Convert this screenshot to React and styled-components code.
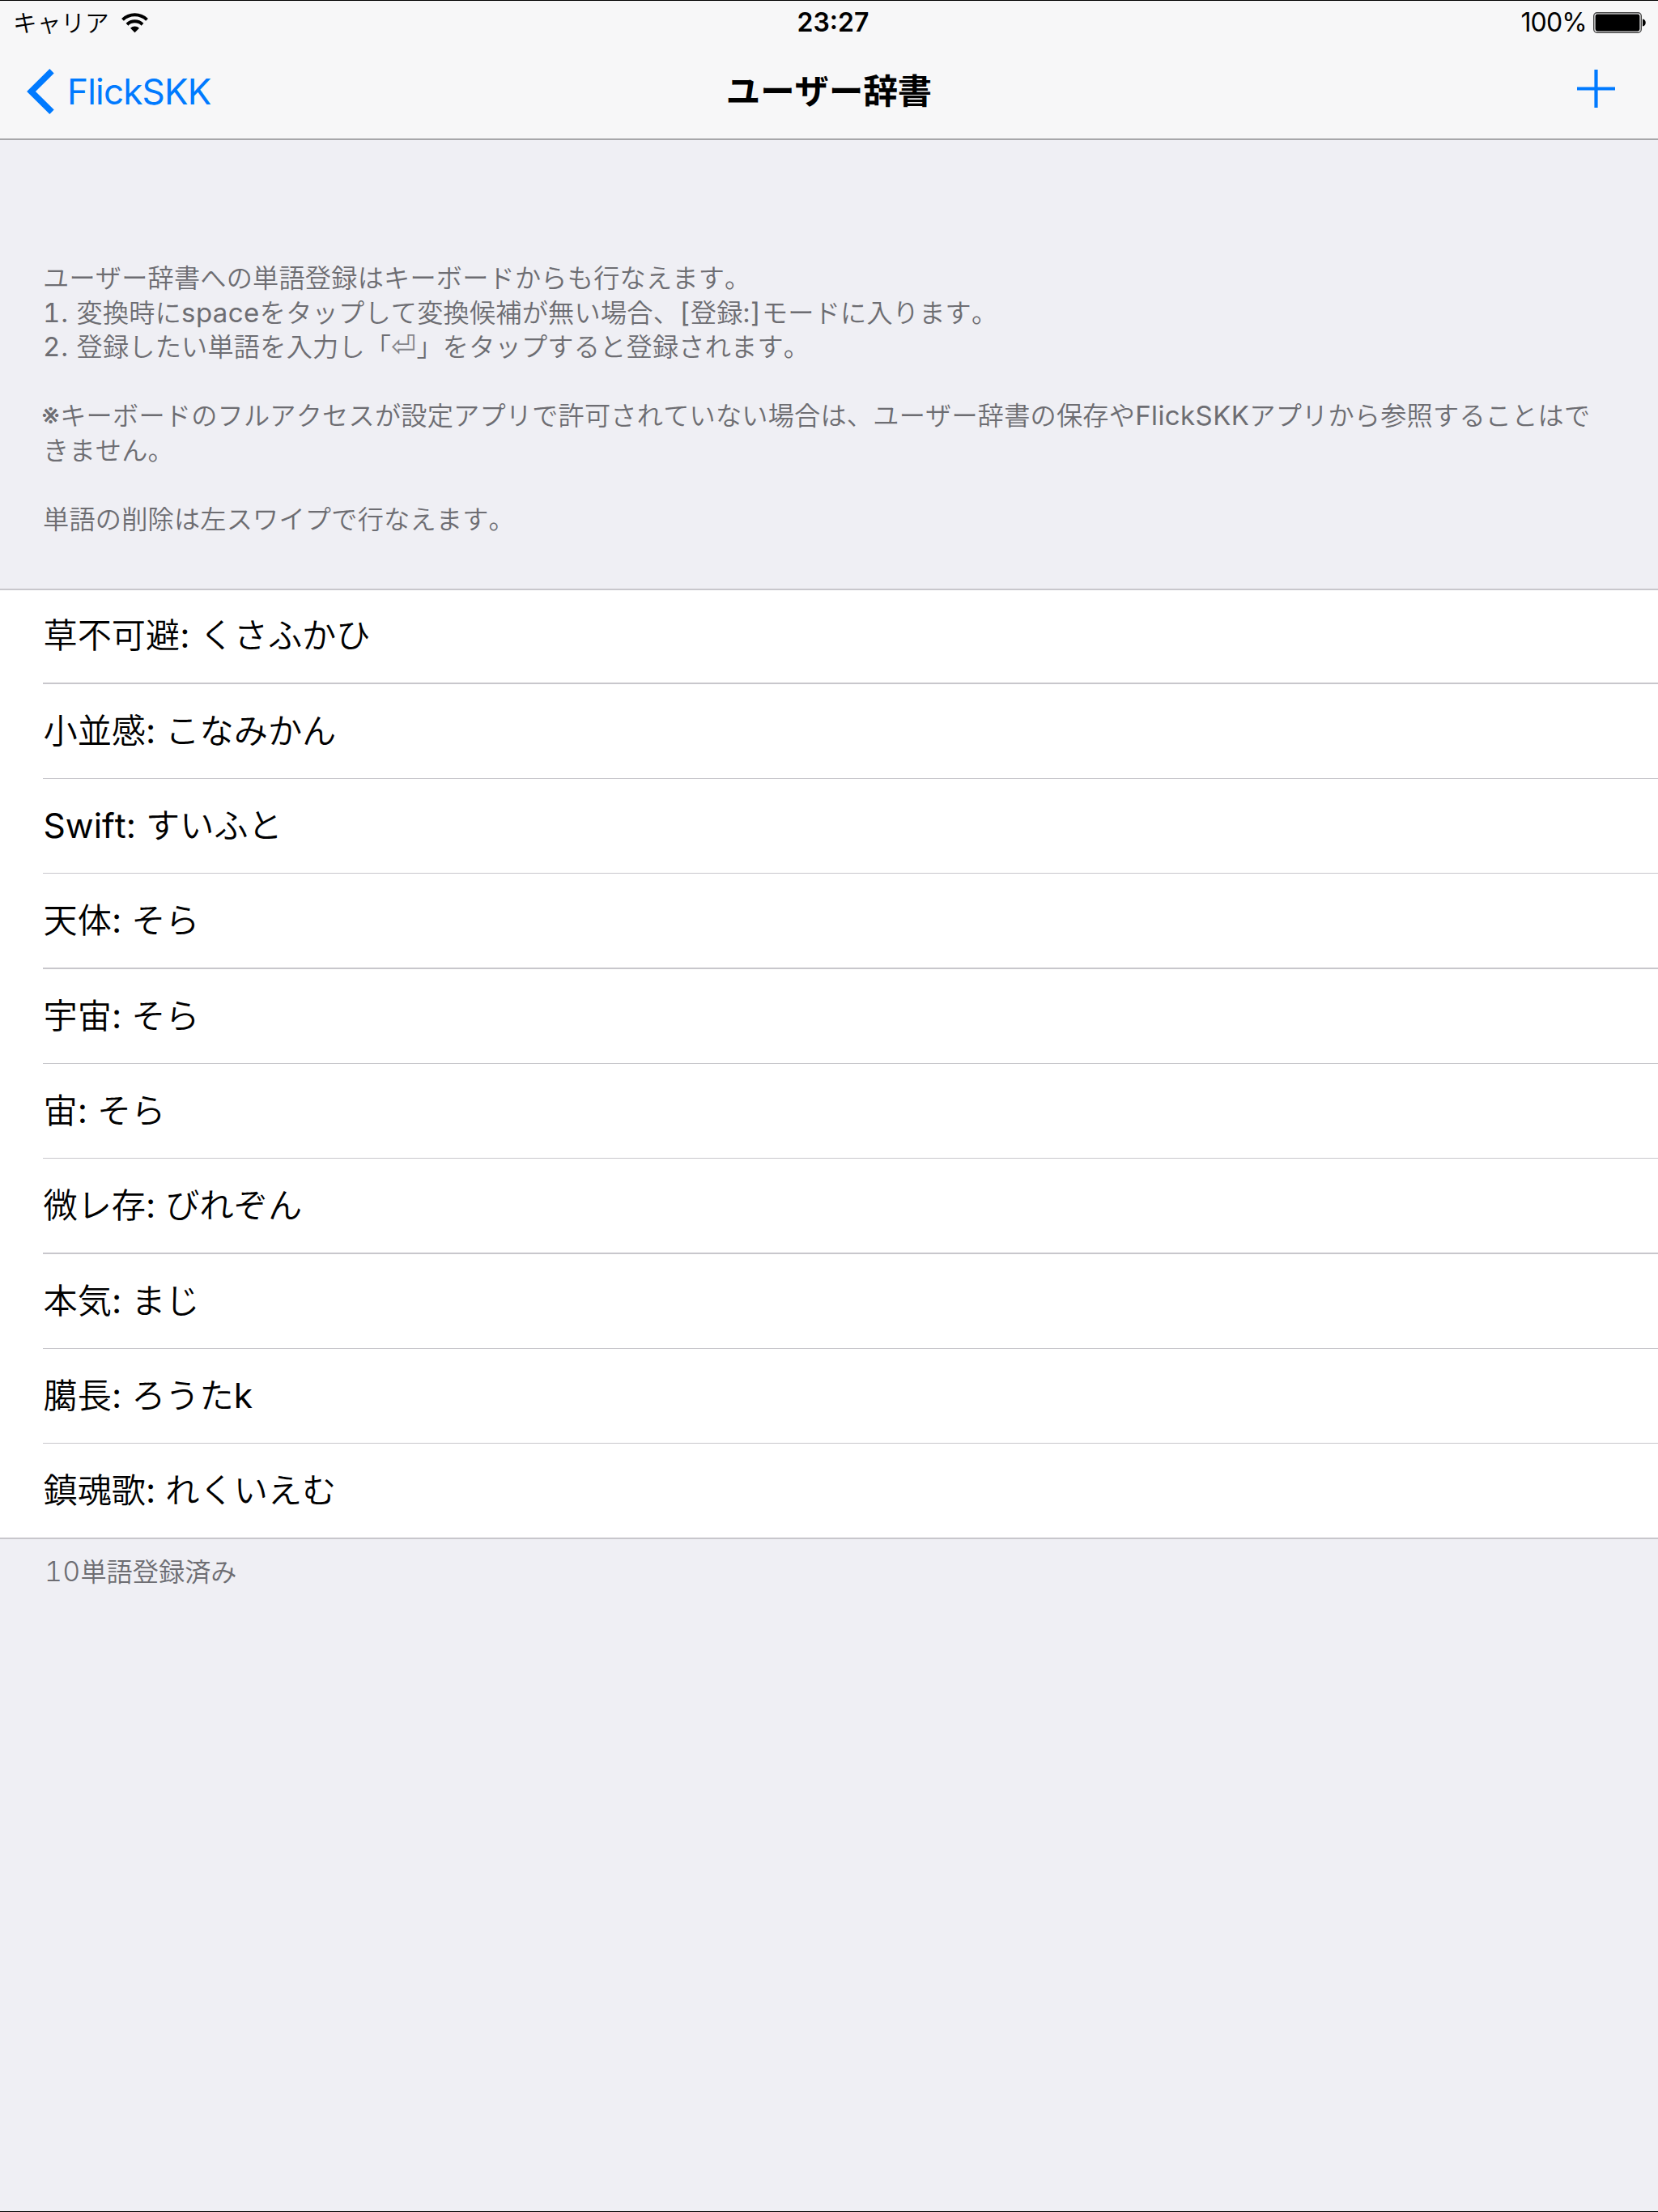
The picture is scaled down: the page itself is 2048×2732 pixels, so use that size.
import React from "react";
import styled, { createGlobalStyle } from "styled-components";

const GlobalStyle = createGlobalStyle`
  * { box-sizing: border-box; }
  html, body { margin: 0; padding: 0; }
  body {
    background: #efeff4;
    font-family: Inter, "Noto Sans CJK JP", sans-serif;
    font-kerning: none;
    -webkit-font-smoothing: antialiased;
  }
`;

const Screen = styled.div`
  display: flex;
  flex-direction: column;
  width: 2048px;
  height: 2732px;
  overflow: hidden;
  background: #efeff4;
  border-top: 1px solid #000;
  border-bottom: 1px solid #000;
`;

const Header = styled.header`
  height: 172px;
  background: #f7f7f8;
  border-bottom: 2px solid #a7a7aa;
`;

const StatusBar = styled.div`
  display: grid;
  grid-template-columns: 1fr auto 1fr;
  align-items: center;
  height: 54px;
  padding: 0 14px 0 16px;
`;

const StatusGroup = styled.div`
  display: flex;
  align-items: center;
  justify-content: ${(p) => (p.$end ? "flex-end" : "flex-start")};
  gap: ${(p) => p.$gap}px;
`;

const StatusText = styled.span`
  font-size: ${(p) => p.$size || 32}px;
  font-weight: ${(p) => p.$weight || 400};
  letter-spacing: ${(p) => p.$track || 0}px;
  margin-left: ${(p) => p.$shift || 0}px;
  line-height: 54px;
  white-space: nowrap;
`;

const NavBar = styled.nav`
  display: grid;
  grid-template-columns: 1fr auto 1fr;
  align-items: center;
  height: 116px;
  padding: 0 33px;
`;

const BackButton = styled.button`
  display: flex;
  align-items: center;
  gap: 16px;
  padding: 0;
  border: 0;
  background: none;
  color: #007aff;
  font-family: inherit;
  font-size: 44px;
  letter-spacing: -0.8px;
  line-height: 60px;
`;

const Title = styled.h1`
  margin: 0;
  font-size: 42.4px;
  font-weight: 700;
  line-height: 60px;
`;

const AddButton = styled.button`
  display: flex;
  justify-self: end;
  margin: 0 20px 7px 0;
  padding: 0;
  border: 0;
  background: none;
`;

const Notes = styled.section`
  height: 554px;
  padding: 150px 0 0 53px;
  color: #6d6d72;
  font-size: 32.2px;
  font-weight: 350;
  line-height: 42.6px;
`;

const NoteLine = styled.p`
  margin: 0;
  height: 42.6px;
  white-space: pre;
  letter-spacing: 0.2px;
`;

const Latin = styled.span`
  font-size: 33px;
  font-weight: 400;
  font-feature-settings: "tnum";
  letter-spacing: ${(p) => p.$track ?? 0.4}px;
  line-height: 0;
`;

const Reference = styled.span`
  margin-left: -2px;
  font-size: 36px;
  font-weight: 430;
  line-height: 0;
`;

const ReturnKey = styled.span`
  font-family: "DejaVu Sans", sans-serif;
  font-size: 37px;
  line-height: 0;
  opacity: 0.8;
`;

const List = styled.ul`
  margin: 0;
  padding: 0;
  list-style: none;
  background: #fff;
  border-top: 2px solid #c8c7cc;
  border-bottom: 2px solid #c8c7cc;
`;

const Row = styled.li`
  display: flex;
  padding-left: 53px;
`;

const RowText = styled.div`
  flex: 1;
  height: ${(p) => p.$height}px;
  padding-left: 0.5px;
  border-bottom: ${(p) => p.$line}px solid #c8c7cc;
  font-size: 42.2px;
  font-weight: 350;
  line-height: 116px;
  white-space: pre;

  ${Row}:first-child & {
    line-height: 112px;
  }
`;

const RowLatin = styled.span`
  font-size: 42.6px;
  font-weight: 400;
  line-height: 0;
`;

const Footer = styled.footer`
  padding: 16px 0 0 55px;
  color: #6d6d72;
  font-size: 32.2px;
  font-weight: 350;
  line-height: 50px;
`;

const Count = styled.span`
  font-size: 34px;
  font-feature-settings: "tnum";
  letter-spacing: 0.2px;
  line-height: 0;
`;

const entries = [
  { word: "草不可避", reading: "くさふかひ", height: 116, line: 2 },
  { word: "小並感", reading: "こなみかん", height: 117, line: 1 },
  { word: "Swift", reading: "すいふと", height: 117, line: 1 },
  { word: "天体", reading: "そら", height: 118, line: 2 },
  { word: "宇宙", reading: "そら", height: 117, line: 1 },
  { word: "宙", reading: "そら", height: 117, line: 1 },
  { word: "微レ存", reading: "びれぞん", height: 118, line: 2 },
  { word: "本気", reading: "まじ", height: 117, line: 1 },
  { word: "臈長", reading: "ろうたk", height: 117, line: 1 },
  { word: "鎮魂歌", reading: "れくいえむ", height: 116, line: 0 },
];

const Entry = ({ text }) =>
  text
    .split(/([ -~]+)/)
    .filter(Boolean)
    .map((part, i) => (/^[ -~]/.test(part) ? <RowLatin key={i}>{part}</RowLatin> : part));

const Wifi = () => (
  <svg width="33" height="25" viewBox="0 0 33 25" fill="none">
    <path d="M1.5 8.4A21.5 21.5 0 0 1 31.5 8.4" stroke="#000" strokeWidth="4" />
    <path d="M7 14.2A13.7 13.7 0 0 1 26 14.2" stroke="#000" strokeWidth="4" />
    <path d="M16.5 24.3L11 18.8A8 8 0 0 1 22 18.8Z" fill="#000" />
  </svg>
);

const Battery = () => (
  <svg width="66" height="26" viewBox="0 0 66 26">
    <rect x="0.7" y="0.7" width="58.6" height="24.6" rx="4" fill="none" stroke="#444" strokeWidth="1.4" />
    <rect x="2.6" y="2.6" width="54.8" height="20.8" rx="2.4" fill="#000" />
    <path d="M61 8.5C66 9 66 17 61 17.5Z" fill="#000" />
  </svg>
);

const Chevron = () => (
  <svg width="34" height="56" viewBox="0 0 34 56" fill="none">
    <path d="M31 2.8L5.5 28L31 53.2" stroke="#007aff" strokeWidth="7.6" />
  </svg>
);

const Plus = () => (
  <svg width="47" height="47" viewBox="0 0 47 47">
    <path d="M23.5 0V47M0 23.5H47" stroke="#007aff" strokeWidth="4.2" />
  </svg>
);

export default function App() {
  return (
    <Screen>
      <GlobalStyle />
      <Header>
        <StatusBar>
          <StatusGroup $gap={15}>
            <StatusText $size={29.7} $weight={350}>
              キャリア
            </StatusText>
            <Wifi />
          </StatusGroup>
          <StatusText $weight={600} $shift={8}>
            23:27
          </StatusText>
          <StatusGroup $end $gap={8}>
            <StatusText $track={-0.8}>100%</StatusText>
            <Battery />
          </StatusGroup>
        </StatusBar>
        <NavBar>
          <BackButton>
            <Chevron />
            FlickSKK
          </BackButton>
          <Title>ユーザー辞書</Title>
          <AddButton aria-label="追加">
            <Plus />
          </AddButton>
        </NavBar>
      </Header>
      <Notes>
        <NoteLine>ユーザー辞書への単語登録はキーボードからも行なえます。</NoteLine>
        <NoteLine>
          <Latin $track={0.8}>1. </Latin>変換時に<Latin $track={0.5}>space</Latin>
          をタップして変換候補が無い場合、<Latin $track={0.8}>[</Latin>登録<Latin $track={0.8}>:]</Latin>
          モードに入ります。
        </NoteLine>
        <NoteLine>
          <Latin $track={0.8}>2. </Latin>登録したい単語を入力し「<ReturnKey>⏎</ReturnKey>
          」をタップすると登録されます。
        </NoteLine>
        <NoteLine />
        <NoteLine>
          <Reference>※</Reference>
          キーボードのフルアクセスが設定アプリで許可されていない場合は、ユーザー辞書の保存や<Latin>FlickSKK</Latin>
          アプリから参照することはで
        </NoteLine>
        <NoteLine>きません。</NoteLine>
        <NoteLine />
        <NoteLine>単語の削除は左スワイプで行なえます。</NoteLine>
      </Notes>
      <List>
        {entries.map((e) => (
          <Row key={e.word}>
            <RowText $height={e.height} $line={e.line}>
              <Entry text={`${e.word}: ${e.reading}`} />
            </RowText>
          </Row>
        ))}
      </List>
      <Footer>
        <Count>10</Count>単語登録済み
      </Footer>
    </Screen>
  );
}
